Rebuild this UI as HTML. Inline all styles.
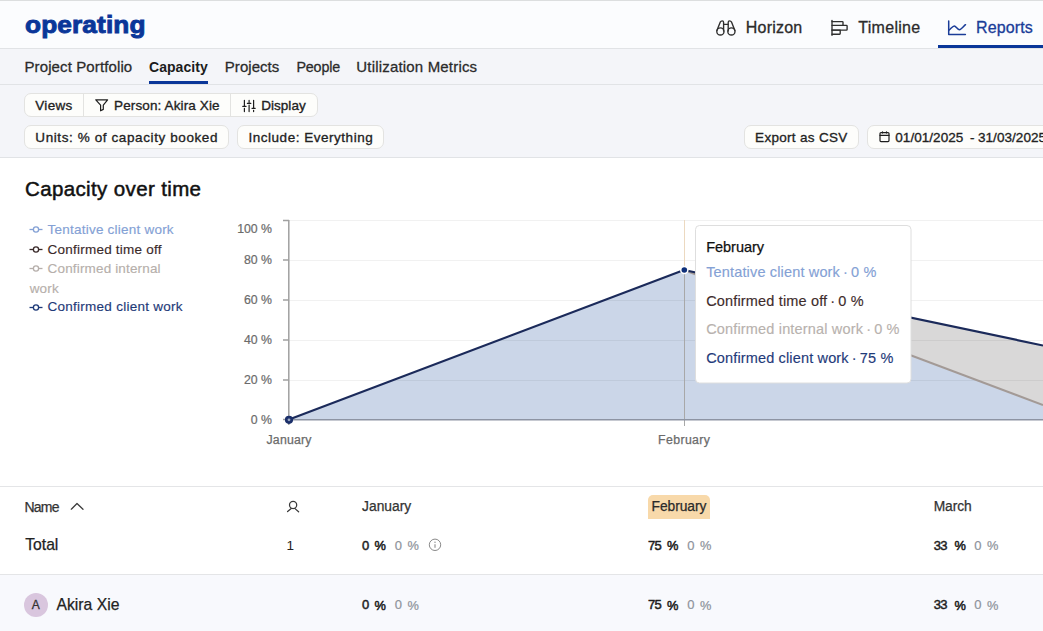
<!DOCTYPE html>
<html><head><meta charset="utf-8">
<style>
html,body{margin:0;padding:0}
body{width:1043px;height:631px;overflow:hidden;position:relative;background:#fff;font-family:"Liberation Sans",sans-serif}
.t{position:absolute;white-space:nowrap;line-height:1}
.abs{position:absolute}
</style></head><body>
<!-- header -->
<div class="abs" style="left:0;top:0;width:1043px;height:48px;background:#fbfcfe;border-top:1px solid #dcdedf;box-sizing:border-box"></div>
<div class="abs" style="left:0;top:48px;width:1043px;height:1px;background:#e1e3e6"></div>
<div class="abs" style="left:0;top:49px;width:1043px;height:108px;background:#f4f5f9"></div>
<div class="abs" style="left:0;top:84px;width:1043px;height:1px;background:#e1e3e6"></div>
<div class="abs" style="left:0;top:157px;width:1043px;height:1px;background:#e1e3e6"></div>
<!-- nav underline -->
<div class="abs" style="left:938px;top:45px;width:105px;height:3px;background:#0a3699"></div>
<div class="abs" style="left:149px;top:81px;width:59px;height:3px;background:#0a3699"></div>
<!-- header icons -->
<svg class="abs" style="left:700px;top:10px" width="343" height="30" viewBox="700 10 343 30">
 <g fill="none" stroke="#2e2e2e" stroke-width="1.35" stroke-linecap="round" stroke-linejoin="round">
  <circle cx="720.4" cy="31.4" r="3.6"/><circle cx="731.4" cy="31.4" r="3.6"/>
  <path d="M716.9 30.6 L720.2 22.2 Q721 20.8 722.2 20.8 Q723.6 20.8 723.6 22.4 V31"/>
  <path d="M734.9 30.6 L731.6 22.2 Q730.8 20.8 729.6 20.8 Q728.2 20.8 728.2 22.4 V31"/>
  <path d="M723.6 24.3 H728.2"/>
 </g>
 <g fill="none" stroke="#2e2e2e" stroke-width="1.35" stroke-linecap="round" stroke-linejoin="round">
  <path d="M832 20.5 V35.3"/>
  <path d="M832 21.6 H842.3 Q843 21.6 843 22.3 V25.3 H832"/>
  <path d="M843 25.3 H846.4 Q847.1 25.3 847.1 26 V29.4 Q847.1 30.1 846.4 30.1 H832"/>
  <path d="M832 30.1 H840.2 V33.6 Q840.2 34.2 839.6 34.2 H832"/>
 </g>
 <g fill="none" stroke="#1a3c98" stroke-width="1.5" stroke-linecap="round" stroke-linejoin="round">
  <path d="M948.7 21 V34.6 H965.4"/>
  <path d="M948.9 30.2 C951 28.5 952.8 25.9 954.3 25.9 C956 25.9 957.5 29.7 959.5 29.7 C961.3 29.7 963.5 26.3 965.5 24.7"/>
 </g>
</svg>
<!-- filter buttons -->
<div class="abs" style="left:24px;top:93px;width:294px;height:24px;box-sizing:border-box;border:1px solid #e3e3e1;border-radius:7px;background:#fdfdfb"></div>
<div class="abs" style="left:83px;top:94px;width:1px;height:22px;background:#e3e3e1"></div>
<div class="abs" style="left:230px;top:94px;width:1px;height:22px;background:#e3e3e1"></div>
<div class="abs" style="left:24px;top:125px;width:205px;height:24px;box-sizing:border-box;border:1px solid #e3e3e1;border-radius:7px;background:#fdfdfb"></div>
<div class="abs" style="left:237px;top:125px;width:147px;height:24px;box-sizing:border-box;border:1px solid #e3e3e1;border-radius:7px;background:#fdfdfb"></div>
<div class="abs" style="left:744px;top:125px;width:115px;height:24px;box-sizing:border-box;border:1px solid #e3e3e1;border-radius:7px;background:#fdfdfb"></div>
<div class="abs" style="left:867px;top:125px;width:200px;height:24px;box-sizing:border-box;border:1px solid #e3e3e1;border-radius:7px;background:#fdfdfb"></div>
<svg class="abs" style="left:0;top:88px" width="1043" height="70" viewBox="0 88 1043 70">
 <g fill="none" stroke="#1e1e1e" stroke-width="1.2" stroke-linejoin="round" stroke-linecap="round">
  <path d="M95.8 99.8 H107.6 L103.3 105.2 V109.4 L100.6 110.8 V105.2 Z"/>
  <path d="M244.4 100.3 V106.4 M242.8 106.4 H246 M244.4 108.3 V111.6"/>
  <path d="M249.1 100.3 V102.3 M247.4 103.4 H250.8 M249.1 105 V111.6"/>
  <path d="M253.6 100.3 V108.3 M252 108.3 H255.2 M253.6 110.3 V111.6"/>
  <rect x="880" y="132.6" width="9" height="9" rx="1"/>
  <path d="M880 135.4 H889 M882.5 131.8 V133 M886.5 131.8 V133"/>
 </g>
</svg>
<svg class="abs" style="left:0;top:215px" width="200" height="110" viewBox="0 215 200 110">
 <g fill="#fff" stroke-width="1.3">
  <g stroke="#84a1d5"><path d="M29.5 229.5 H42.5"/><circle cx="36" cy="229.5" r="2.6"/></g>
  <g stroke="#3a2a2a"><path d="M29.5 249.5 H42.5"/><circle cx="36" cy="249.5" r="2.6"/></g>
  <g stroke="#b6afab"><path d="M29.5 268.5 H42.5"/><circle cx="36" cy="268.5" r="2.6"/></g>
  <g stroke="#1e3a78"><path d="M29.5 307.5 H42.5"/><circle cx="36" cy="307.5" r="2.6"/></g>
 </g>
</svg>
<!-- chart -->
<svg class="abs" style="left:0;top:158px" width="1043" height="328" viewBox="0 158 1043 328">
 <polygon points="684,270 1043,345.5 1043,405 684,270" fill="#d9d8d8"/>
 <polygon points="289,419.5 684,270 1043,405 1043,419.5" fill="#cbd6e8"/>
 <g stroke="#000" stroke-opacity="0.055" stroke-width="1">
  <path d="M289 220.5 H1043 M289 260.5 H1043 M289 300.5 H1043 M289 340.5 H1043 M289 380.5 H1043"/>
 </g>
 <path d="M684.5 220 V268" stroke="#ecd9c0" stroke-width="1"/>
 <path d="M684.5 270 V426" stroke="#a8a8a8" stroke-width="1"/>
 <path d="M289 419.8 H1043" stroke="#8d94a3" stroke-width="1.4"/>
 <path d="M288.8 220 V425" stroke="#a0a0a0" stroke-width="1.5"/>
 <g stroke="#a0a0a0" stroke-width="1.5">
  <path d="M283 220.5 H289 M283 260 H289 M283 300 H289 M283 340 H289 M283 380 H289 M283 419.5 H289"/>
 </g>
 <path d="M684 270 L1043 405" stroke="#a39a96" stroke-width="2" fill="none"/>
 <path d="M289 419.5 L684 270 L1043 345.5" stroke="#1b2a5a" stroke-width="2.2" fill="none" stroke-linejoin="round"/>
 <circle cx="289" cy="419.8" r="4.1" fill="#1b2f6a"/><circle cx="289" cy="419.8" r="1.4" fill="#9aa6c0"/>
 <circle cx="684.3" cy="270" r="4.3" fill="#fff"/>
 <circle cx="684.3" cy="270" r="2.8" fill="#0e2f7a"/>
 <!-- tooltip -->
 <rect x="695.5" y="225.5" width="215.5" height="157.5" rx="4" fill="#fff" stroke="#dedede" stroke-width="1"/>
</svg>
<!-- table -->
<div class="abs" style="left:0;top:486px;width:1043px;height:1px;background:#e4e5e7"></div>
<div class="abs" style="left:0;top:574px;width:1043px;height:1px;background:#e4e5e7"></div>
<div class="abs" style="left:0;top:575px;width:1043px;height:56px;background:#f8f9fd"></div>
<div class="abs" style="left:648px;top:495px;width:62px;height:24px;background:#f8d9aa;border-radius:5px 5px 0 0"></div>
<div class="abs" style="left:24px;top:593px;width:24px;height:24px;border-radius:50%;background:#d9c6de"></div>
<svg class="abs" style="left:0;top:490px" width="1043" height="70" viewBox="0 490 1043 70">
 <g fill="none" stroke="#3a3a3a" stroke-width="1.25" stroke-linecap="round" stroke-linejoin="round">
  <path d="M71.3 509.2 L77 503.5 L83 509.3"/>
  <circle cx="293.1" cy="504.9" r="3.6"/>
  <path d="M287.6 511.6 L291.2 508.6 M295 508.6 L298.6 511.8"/>
 </g>
 <circle cx="435" cy="544.8" r="5.7" fill="none" stroke="#8a8a8a" stroke-width="1"/>
 <path d="M435 544.3 V547.8" stroke="#8a8a8a" stroke-width="1.1"/>
 <circle cx="435" cy="542.3" r="0.7" fill="#8a8a8a"/>
</svg>
<div class="t" style="left:24.80px;top:14.00px;font-size:23.5px;letter-spacing:0.120px;color:#0a3699;font-weight:700;-webkit-text-stroke:0.9px #0a3699;transform:scaleX(1.115);transform-origin:0 0;">operating</div>
<div class="t" style="left:745.80px;top:20.00px;font-size:16px;letter-spacing:0.213px;color:#2b2b2b;-webkit-text-stroke:0.3px #2b2b2b;">Horizon</div>
<div class="t" style="left:858.20px;top:20.00px;font-size:16px;letter-spacing:0.309px;color:#2b2b2b;-webkit-text-stroke:0.3px #2b2b2b;">Timeline</div>
<div class="t" style="left:976.00px;top:20.00px;font-size:16px;letter-spacing:0.133px;color:#1a3c98;-webkit-text-stroke:0.3px #1a3c98;">Reports</div>
<div class="t" style="left:24.50px;top:59.00px;font-size:15px;letter-spacing:0.112px;color:#2b2b2b;-webkit-text-stroke:0.28px #2b2b2b;">Project Portfolio</div>
<div class="t" style="left:149.00px;top:60.00px;font-size:14px;letter-spacing:0.046px;color:#1c1c1c;font-weight:700;-webkit-text-stroke:0px #1c1c1c;">Capacity</div>
<div class="t" style="left:224.80px;top:59.00px;font-size:15px;letter-spacing:0.050px;color:#2b2b2b;-webkit-text-stroke:0.28px #2b2b2b;">Projects</div>
<div class="t" style="left:296.40px;top:60.00px;font-size:14.3px;letter-spacing:-0.149px;color:#2b2b2b;-webkit-text-stroke:0.28px #2b2b2b;">People</div>
<div class="t" style="left:356.30px;top:59.00px;font-size:15px;letter-spacing:0.182px;color:#2b2b2b;-webkit-text-stroke:0.28px #2b2b2b;">Utilization Metrics</div>
<div class="t" style="left:35.30px;top:99.00px;font-size:13.5px;letter-spacing:0.306px;color:#222;-webkit-text-stroke:0.32px #222;">Views</div>
<div class="t" style="left:114.00px;top:99.00px;font-size:13.5px;letter-spacing:0.128px;color:#222;-webkit-text-stroke:0.32px #222;">Person: Akira Xie</div>
<div class="t" style="left:261.20px;top:99.00px;font-size:13.5px;letter-spacing:0.037px;color:#222;-webkit-text-stroke:0.35px #222;">Display</div>
<div class="t" style="left:35.30px;top:131.00px;font-size:13.5px;letter-spacing:0.600px;color:#222;-webkit-text-stroke:0.32px #222;">Units: % of capacity booked</div>
<div class="t" style="left:248.50px;top:131.00px;font-size:13.5px;letter-spacing:0.521px;color:#222;-webkit-text-stroke:0.32px #222;">Include: Everything</div>
<div class="t" style="left:755.10px;top:131.00px;font-size:13.5px;letter-spacing:0.303px;color:#222;-webkit-text-stroke:0.32px #222;">Export as CSV</div>
<div class="t" style="left:895.30px;top:131.00px;font-size:13.5px;letter-spacing:0.048px;color:#222;-webkit-text-stroke:0.32px #222;">01/01/2025</div>
<div class="t" style="left:970.00px;top:131.00px;font-size:13.5px;letter-spacing:0.000px;color:#222;-webkit-text-stroke:0.32px #222;">-</div>
<div class="t" style="left:978.00px;top:131.00px;font-size:13.5px;letter-spacing:0.048px;color:#222;-webkit-text-stroke:0.32px #222;">31/03/2025</div>
<div class="t" style="left:25.00px;top:179.00px;font-size:20.5px;letter-spacing:0.368px;color:#111;-webkit-text-stroke:0.5px #111;">Capacity over time</div>
<div class="t" style="left:47.60px;top:223.00px;font-size:13.5px;letter-spacing:0.223px;color:#84a1d5;-webkit-text-stroke:0.15px #84a1d5;">Tentative client work</div>
<div class="t" style="left:47.60px;top:243.00px;font-size:13.5px;letter-spacing:0.224px;color:#3a2a2a;-webkit-text-stroke:0.15px #3a2a2a;">Confirmed time off</div>
<div class="t" style="left:47.60px;top:262.00px;font-size:13.5px;letter-spacing:0.159px;color:#b6afab;-webkit-text-stroke:0.15px #b6afab;">Confirmed internal</div>
<div class="t" style="left:29.67px;top:282.00px;font-size:13.5px;letter-spacing:0.193px;color:#b6afab;-webkit-text-stroke:0.15px #b6afab;">work</div>
<div class="t" style="left:47.60px;top:300.00px;font-size:13.5px;letter-spacing:0.252px;color:#1e3a78;-webkit-text-stroke:0.15px #1e3a78;">Confirmed client work</div>
<div class="t" style="right:771.00px;top:223.00px;font-size:12.3px;color:#6b6b6b;-webkit-text-stroke:0.2px #6b6b6b;text-align:right">100 %</div>
<div class="t" style="right:771.00px;top:254.00px;font-size:12.3px;color:#6b6b6b;-webkit-text-stroke:0.2px #6b6b6b;text-align:right">80 %</div>
<div class="t" style="right:771.00px;top:294.00px;font-size:12.3px;color:#6b6b6b;-webkit-text-stroke:0.2px #6b6b6b;text-align:right">60 %</div>
<div class="t" style="right:771.00px;top:334.00px;font-size:12.3px;color:#6b6b6b;-webkit-text-stroke:0.2px #6b6b6b;text-align:right">40 %</div>
<div class="t" style="right:771.00px;top:374.00px;font-size:12.3px;color:#6b6b6b;-webkit-text-stroke:0.2px #6b6b6b;text-align:right">20 %</div>
<div class="t" style="right:771.00px;top:414.00px;font-size:12.3px;color:#6b6b6b;-webkit-text-stroke:0.2px #6b6b6b;text-align:right">0 %</div>
<div class="t" style="left:266.50px;top:434.00px;font-size:12.3px;letter-spacing:0.202px;color:#6b6b6b;-webkit-text-stroke:0.25px #6b6b6b;">January</div>
<div class="t" style="left:658.00px;top:434.00px;font-size:12.3px;letter-spacing:0.400px;color:#6b6b6b;-webkit-text-stroke:0.25px #6b6b6b;">February</div>
<div class="t" style="left:706.20px;top:240.00px;font-size:14.5px;letter-spacing:-0.029px;color:#111;-webkit-text-stroke:0.25px #111;">February</div>
<div class="t" style="left:706.20px;top:265.00px;font-size:14.5px;letter-spacing:0.155px;color:#84a1d5;-webkit-text-stroke:0.15px #84a1d5;">Tentative client work · 0 %</div>
<div class="t" style="left:706.20px;top:294.00px;font-size:14.5px;letter-spacing:0.159px;color:#3e2c2c;-webkit-text-stroke:0.15px #3e2c2c;">Confirmed time off · 0 %</div>
<div class="t" style="left:706.20px;top:322.00px;font-size:14.5px;letter-spacing:0.164px;color:#b8b2ae;-webkit-text-stroke:0.15px #b8b2ae;">Confirmed internal work · 0 %</div>
<div class="t" style="left:706.20px;top:351.00px;font-size:14.5px;letter-spacing:0.150px;color:#1f3b7a;-webkit-text-stroke:0.15px #1f3b7a;">Confirmed client work · 75 %</div>
<div class="t" style="left:24.40px;top:500.00px;font-size:14px;letter-spacing:-0.760px;color:#333;-webkit-text-stroke:0.25px #333;">Name</div>
<div class="t" style="left:362.10px;top:500.00px;font-size:13.8px;letter-spacing:-0.005px;color:#333;-webkit-text-stroke:0.25px #333;">January</div>
<div class="t" style="left:651.60px;top:500.00px;font-size:13.8px;letter-spacing:-0.071px;color:#2a2a2a;-webkit-text-stroke:0.25px #2a2a2a;">February</div>
<div class="t" style="left:933.70px;top:500.00px;font-size:13.8px;letter-spacing:-0.066px;color:#333;-webkit-text-stroke:0.25px #333;">March</div>
<div class="t" style="left:25.30px;top:537.00px;font-size:15.7px;letter-spacing:-0.032px;color:#222;-webkit-text-stroke:0.25px #222;">Total</div>
<div class="t" style="left:286.50px;top:539.00px;font-size:13.5px;letter-spacing:0.000px;color:#222;-webkit-text-stroke:0px #222;">1</div>
<div class="t" style="left:362.10px;top:539.00px;font-size:13px;letter-spacing:0.000px;color:#1e1e1e;-webkit-text-stroke:0.5px #1e1e1e;">0</div>
<div class="t" style="left:374.50px;top:540.00px;font-size:12.8px;letter-spacing:0.000px;color:#1e1e1e;-webkit-text-stroke:0.5px #1e1e1e;">%</div>
<div class="t" style="left:394.70px;top:539.00px;font-size:13px;letter-spacing:0.000px;color:#8e939b;-webkit-text-stroke:0.2px #8e939b;">0</div>
<div class="t" style="left:407.50px;top:540.00px;font-size:12.8px;letter-spacing:0.000px;color:#8e939b;-webkit-text-stroke:0.2px #8e939b;">%</div>
<div class="t" style="left:648.10px;top:539.00px;font-size:13px;letter-spacing:-0.930px;color:#1e1e1e;-webkit-text-stroke:0.5px #1e1e1e;">75</div>
<div class="t" style="left:667.10px;top:540.00px;font-size:12.8px;letter-spacing:0.000px;color:#1e1e1e;-webkit-text-stroke:0.5px #1e1e1e;">%</div>
<div class="t" style="left:687.30px;top:539.00px;font-size:13px;letter-spacing:0.000px;color:#8e939b;-webkit-text-stroke:0.2px #8e939b;">0</div>
<div class="t" style="left:699.90px;top:540.00px;font-size:12.8px;letter-spacing:0.000px;color:#8e939b;-webkit-text-stroke:0.2px #8e939b;">%</div>
<div class="t" style="left:933.70px;top:539.00px;font-size:13px;letter-spacing:-0.630px;color:#1e1e1e;-webkit-text-stroke:0.5px #1e1e1e;">33</div>
<div class="t" style="left:954.50px;top:540.00px;font-size:12.8px;letter-spacing:0.000px;color:#1e1e1e;-webkit-text-stroke:0.5px #1e1e1e;">%</div>
<div class="t" style="left:974.20px;top:539.00px;font-size:13px;letter-spacing:0.000px;color:#8e939b;-webkit-text-stroke:0.2px #8e939b;">0</div>
<div class="t" style="left:987.00px;top:540.00px;font-size:12.8px;letter-spacing:0.000px;color:#8e939b;-webkit-text-stroke:0.2px #8e939b;">%</div>
<div class="t" style="left:362.10px;top:598.00px;font-size:13px;letter-spacing:0.000px;color:#1e1e1e;-webkit-text-stroke:0.5px #1e1e1e;">0</div>
<div class="t" style="left:374.50px;top:600.00px;font-size:12.8px;letter-spacing:0.000px;color:#1e1e1e;-webkit-text-stroke:0.5px #1e1e1e;">%</div>
<div class="t" style="left:394.70px;top:598.00px;font-size:13px;letter-spacing:0.000px;color:#8e939b;-webkit-text-stroke:0.2px #8e939b;">0</div>
<div class="t" style="left:407.50px;top:600.00px;font-size:12.8px;letter-spacing:0.000px;color:#8e939b;-webkit-text-stroke:0.2px #8e939b;">%</div>
<div class="t" style="left:648.10px;top:598.00px;font-size:13px;letter-spacing:-0.930px;color:#1e1e1e;-webkit-text-stroke:0.5px #1e1e1e;">75</div>
<div class="t" style="left:667.10px;top:600.00px;font-size:12.8px;letter-spacing:0.000px;color:#1e1e1e;-webkit-text-stroke:0.5px #1e1e1e;">%</div>
<div class="t" style="left:687.30px;top:598.00px;font-size:13px;letter-spacing:0.000px;color:#8e939b;-webkit-text-stroke:0.2px #8e939b;">0</div>
<div class="t" style="left:699.90px;top:600.00px;font-size:12.8px;letter-spacing:0.000px;color:#8e939b;-webkit-text-stroke:0.2px #8e939b;">%</div>
<div class="t" style="left:933.70px;top:598.00px;font-size:13px;letter-spacing:-0.630px;color:#1e1e1e;-webkit-text-stroke:0.5px #1e1e1e;">33</div>
<div class="t" style="left:954.50px;top:600.00px;font-size:12.8px;letter-spacing:0.000px;color:#1e1e1e;-webkit-text-stroke:0.5px #1e1e1e;">%</div>
<div class="t" style="left:974.20px;top:598.00px;font-size:13px;letter-spacing:0.000px;color:#8e939b;-webkit-text-stroke:0.2px #8e939b;">0</div>
<div class="t" style="left:987.00px;top:600.00px;font-size:12.8px;letter-spacing:0.000px;color:#8e939b;-webkit-text-stroke:0.2px #8e939b;">%</div>
<div class="t" style="left:56.50px;top:597.00px;font-size:15.7px;letter-spacing:0.013px;color:#222;-webkit-text-stroke:0.25px #222;">Akira Xie</div>
<div class="t" style="left:31.80px;top:599.00px;font-size:12px;letter-spacing:0.000px;color:#333;-webkit-text-stroke:0.3px #333;">A</div>
</body></html>
